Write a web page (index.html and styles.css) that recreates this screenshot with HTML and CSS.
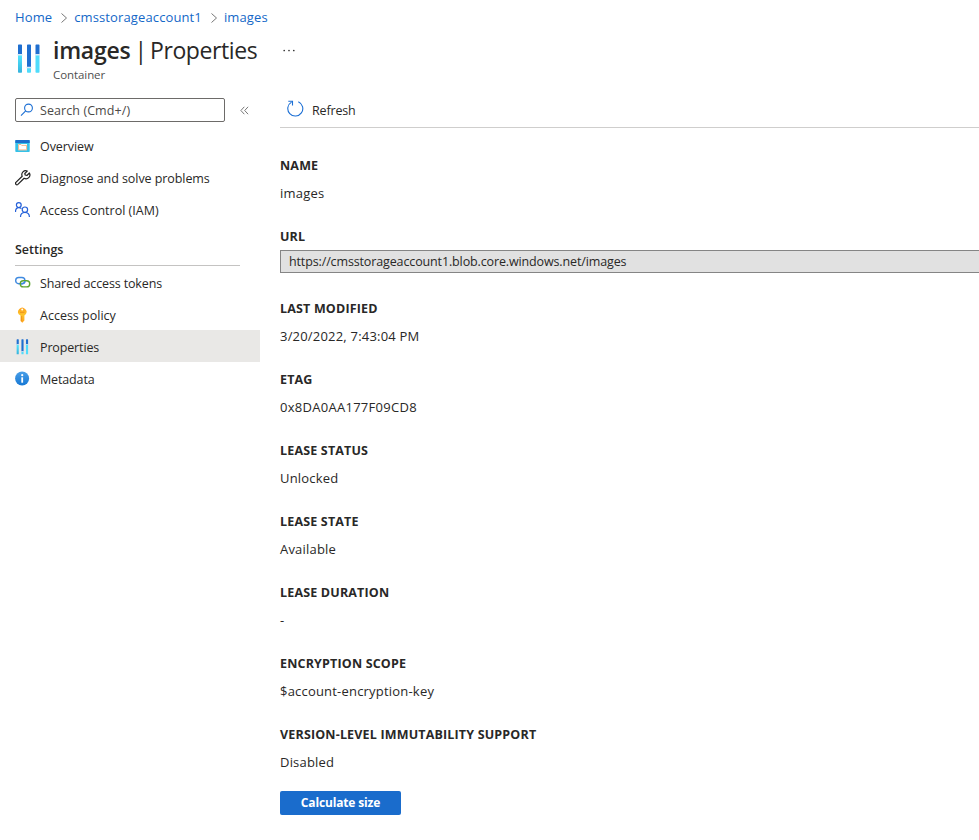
FILE: index.html
```html
<!DOCTYPE html>
<html lang="en">
<head>
<meta charset="utf-8">
<title>images | Properties</title>
<link rel="stylesheet" href="styles.css">
</head>
<body>
<svg width="0" height="0" class="defs" aria-hidden="true">
  <defs>
    <linearGradient id="cyan" x1="0" y1="0" x2="0" y2="1"><stop offset="0" stop-color="#50e6ff"/><stop offset="1" stop-color="#35b2dc"/></linearGradient>
    <linearGradient id="info" x1="0" y1="0" x2="0" y2="1"><stop offset="0" stop-color="#4a9fe8"/><stop offset="1" stop-color="#1678d4"/></linearGradient>
    <linearGradient id="gold" x1="0" y1="0" x2="0" y2="1"><stop offset="0" stop-color="#fea11b"/><stop offset=".5" stop-color="#fdc52c"/><stop offset="1" stop-color="#fea11b"/></linearGradient>
    <symbol id="bars" viewBox="0 0 24 30">
      <path fill="#1f6fd0" d="M1 1.2Q1 .5 1.700 .5h2.600Q5 .5 5 1.200V11H1zM10 1.200Q10 .5 10.700 .5h2.600Q14 .5 14 1.200V24h-4zM18.500 1.200q0-.7.7-.7h2.600q.7 0 .7.700V11h-4z"/>
      <path fill="url(#cyan)" d="M1 11h4v17q0 .7-.7.700H1.700Q1 28.700 1 28z"/>
      <path fill="#50dcfb" d="M18.500 11h4v17q0 .7-.7.700h-2.600q-.7 0-.7-.7zM10 24h4v4q0 .7-.7.700h-2.600q-.7 0-.7-.7z"/>
      <path fill="#d5e9f8" d="M.5 10h5v1.400h-5zM18 10h5v1.400h-5zM9.500 22.800h5v1.400h-5z"/>
    </symbol>
  </defs>
</svg>
<nav class="crumbs">
  <a>Home</a><svg class="chev" viewBox="0 0 8 12"><path d="M1.500 1.500 6.500 6 1.500 10.500"/></svg><a>cmsstorageaccount1</a><svg class="chev" viewBox="0 0 8 12"><path d="M1.500 1.500 6.500 6 1.500 10.500"/></svg><a>images</a>
</nav>
<header class="head">
  <svg class="head-icon"><use href="#bars"/></svg>
  <div class="titles">
    <h1><b>images</b><span class="bar">|</span><span class="page">Properties</span></h1>
    <p>Container</p>
  </div>
  <svg class="more" viewBox="0 0 12 3"><circle cx="1.200" cy="1.500" r=".85"/><circle cx="6" cy="1.500" r=".85"/><circle cx="10.800" cy="1.500" r=".85"/></svg>
</header>
<div class="body">
  <aside>
    <div class="search-row">
      <div class="search">
        <svg class="lens" viewBox="0 0 14 14"><circle cx="8.500" cy="5" r="3.900"/><path d="M5.700 7.900 1 12.600"/></svg>
        <span>Search (Cmd+/)</span>
      </div>
      <svg class="collapse" viewBox="0 0 9 9"><path d="M4.300 .8.900 4.500l3.400 3.700M8.100 .8 4.700 4.500l3.400 3.700"/></svg>
    </div>
    <ul class="menu">
      <li><svg class="ico" viewBox="0 0 16 16"><rect x=".3" y="2" width="14.400" height="12" rx=".7" fill="#35c1e8"/><path fill="#1b6ecb" d="M.3 5V2.700q0-.7.700-.7h13q.7 0 .7.700V5z"/><path fill="#fff" d="M3.200 6h8.800v6.200H3.200z"/><path fill="none" stroke="#efb080" stroke-width=".9" d="M3.600 6.500v5.400h8V7.400H6.700l-.7-.9z"/></svg><span>Overview</span></li>
      <li><svg class="ico line" viewBox="0 0 16 16"><path d="M12.300 1.100A3.900 3.900 0 0 0 7.200 6.300L.9 12.400q-.8 1 .1 1.900.9.900 1.900.1L9.100 8.300A3.900 3.900 0 0 0 14.400 3L11.900 5.500 10.200 5l-.4-1.500z"/></svg><span>Diagnose and solve problems</span></li>
      <li><svg class="ico people" viewBox="0 0 16 16"><circle cx="3.800" cy="3.100" r="2.400"/><path d="M.5 10C.5 7.200 1.900 5.700 3.800 5.700q1.600 0 2.600 1"/><circle cx="9.900" cy="7.700" r="2.700"/><path d="M5.500 14.900c0-3 1.800-4.400 4.400-4.400s4.500 1.400 4.500 4.400"/></svg><span class="iam">Access Control (IAM)</span></li>
    </ul>
    <h2>Settings</h2>
    <ul class="menu settings">
      <li><svg class="ico link" viewBox="0 0 16 16"><rect x=".7" y="2.500" width="9.200" height="6.200" rx="3" stroke="#3f8ae0"/><rect x="5.300" y="5.700" width="9.400" height="6.200" rx="3" stroke="#5ea432"/><path d="M6 8.700h.8q3.100 0 3.100-2.600" stroke="#3f8ae0"/></svg><span>Shared access tokens</span></li>
      <li><svg class="ico" viewBox="0 0 16 16"><path fill="url(#gold)" d="M7.100.4Q8.600 .4 10.400 2.200t1.200 3.100Q11.400 7 9.400 8.500V13.600L7.300 15.700 5.500 14V8.600Q3.200 7.200 2.900 5.400 2.600 3.800 4.300 2.100T7.100.4z"/><circle cx="7.200" cy="2.500" r="1" fill="#fff"/><path d="M5.100 5.400h4.300M6.600 9v5" stroke="#e98c1c" stroke-width=".8"/></svg><span class="policy">Access policy</span></li>
      <li class="on"><svg class="ico-bars"><use href="#bars"/></svg><span>Properties</span></li>
      <li><svg class="ico" viewBox="0 0 16 16"><circle cx="7.100" cy="7.500" r="7" fill="url(#info)"/><circle cx="7.200" cy="4.200" r="1.100" fill="#fff"/><path fill="#fff" d="M6.300 6.300h1.800v5.400H6.300z"/></svg><span>Metadata</span></li>
    </ul>
  </aside>
  <main>
    <div class="toolbar">
      <svg class="refresh" viewBox="0 0 17 18"><path d="M11.300 1.700A7.500 7.500 0 1 1 4.500 2.100M1.300 1.300H5.500V5.500"/></svg>
      <span>Refresh</span>
    </div>
    <dl>
      <div><dt>NAME</dt><dd>images</dd></div>
      <div class="url-row"><dt>URL</dt><dd class="url">https://cmsstorageaccount1.blob.core.windows.net/images</dd></div>
      <div><dt>LAST MODIFIED</dt><dd>3/20/2022, 7:43:04 PM</dd></div>
      <div><dt>ETAG</dt><dd class="etag">0x8DA0AA177F09CD8</dd></div>
      <div><dt>LEASE STATUS</dt><dd>Unlocked</dd></div>
      <div><dt>LEASE STATE</dt><dd>Available</dd></div>
      <div><dt>LEASE DURATION</dt><dd>-</dd></div>
      <div><dt>ENCRYPTION SCOPE</dt><dd>$account-encryption-key</dd></div>
      <div><dt>VERSION-LEVEL IMMUTABILITY SUPPORT</dt><dd>Disabled</dd></div>
    </dl>
    <button type="button">Calculate size</button>
  </main>
</div>
</body>
</html>
```
FILE: styles.css
```css
* { box-sizing: border-box; margin: 0; padding: 0; }
body { width: 979px; height: 840px; overflow: hidden; background: #fff; color: #292827; font: 12.5px/20px "Open Sans", "Noto Sans", sans-serif; }
span, a, dt, dd, h1, h2, p { white-space: nowrap; }
svg { flex: none; }
.defs { display: block; height: 0; }
.crumbs { display: flex; align-items: center; height: 34px; padding-left: 15px; font-size: 13px; letter-spacing: .12px; color: #1468c8; }
.chev { width: 8px; height: 12px; margin: 1px 7px 0 8px; fill: none; stroke: #777; stroke-width: 1; }
.chev + a { margin-left: -1px; }
.head { display: flex; height: 63px; padding-left: 17px; }
.head-icon { width: 24px; height: 30px; margin-top: 10px; }
.titles { width: 204px; margin-left: 12px; }
h1 { display: flex; height: 33px; font-size: 23px; line-height: 32px; font-weight: 400; }
h1 b { font-weight: 600; letter-spacing: -.25px; }
.bar { margin: 0 3px 0 4px; }
.page { letter-spacing: -.42px; }
p { font-size: 11.5px; line-height: 16px; letter-spacing: -.08px; color: #505050; }
.more { width: 12px; height: 3px; margin: 15px 0 0 26px; fill: #333; }
.body { display: flex; }
aside { width: 260px; margin-right: 20px; }
.search-row { display: flex; align-items: center; margin: 1px 0 8px 15px; }
.search { display: flex; align-items: center; width: 210px; height: 24px; padding-left: 4px; border: 1px solid #6d6b69; border-radius: 2px; color: #4c4a48; }
.search span { margin-top: 2px; letter-spacing: .08px; }
.lens { width: 14px; height: 14px; margin-right: 6px; fill: none; stroke: #1c6fd4; stroke-width: 1.1; }
.collapse { width: 9px; height: 9px; margin-left: 15px; fill: none; stroke: #666; stroke-width: .9; }
.menu { list-style: none; letter-spacing: -.07px; }
.settings { letter-spacing: -.14px; }
.iam, .policy { letter-spacing: 0; }
.menu li { display: flex; align-items: center; height: 32px; padding-left: 15px; }
.menu span { margin-top: 1px; }
.settings span { margin-top: 3px; }
.ico { width: 16px; height: 16px; margin: -1px 9px 0 0; }
.settings .ico { margin-top: 1px; }
.line { fill: none; stroke: #222; stroke-width: 1.2; stroke-linejoin: round; }
.people { fill: none; stroke: #2460d8; stroke-width: 1.2; }
.link { fill: none; stroke-width: 1.4; }
.ico-bars { width: 13px; height: 16px; margin: 1px 11px 0 1px; }
.on { background: #e9e8e6; }
h2 { width: 225px; height: 27px; margin: 13px 0 0 15px; padding-top: 1px; border-bottom: 1px solid #c4c3c2; font-size: 12.5px; line-height: 20px; font-weight: 600; }
main { flex: 1; min-width: 0; }
.toolbar { display: flex; align-items: center; height: 31px; margin-bottom: 28px; padding: 0 0 4px 7px; border-bottom: 1px solid #cfcecd; }
.toolbar span { margin-top: 1px; letter-spacing: -.15px; }
.refresh { width: 17px; height: 18px; margin: -2px 8px 0 0; fill: none; stroke: #1c6fd4; stroke-width: 1.1; }
dl > div { height: 71px; }
dl > .url-row { height: 72px; }
dt { font-size: 12.5px; font-weight: 700; line-height: 20px; letter-spacing: .17px; }
dd { margin-top: 7px; font-size: 13px; line-height: 20px; letter-spacing: .2px; }
.etag { letter-spacing: .28px; }
.url { height: 23px; margin-top: 3px; padding-left: 8px; border: 1px solid #858585; border-right: 0; background: #e1e1e1; font-size: 12.5px; line-height: 21px; letter-spacing: -.13px; }
button { display: block; width: 121px; height: 24px; margin-top: -5px; border: 0; border-radius: 2px; background: #1a6ccc; color: #fff; font: 700 12px/24px "Open Sans", sans-serif; letter-spacing: -.15px; }
```
